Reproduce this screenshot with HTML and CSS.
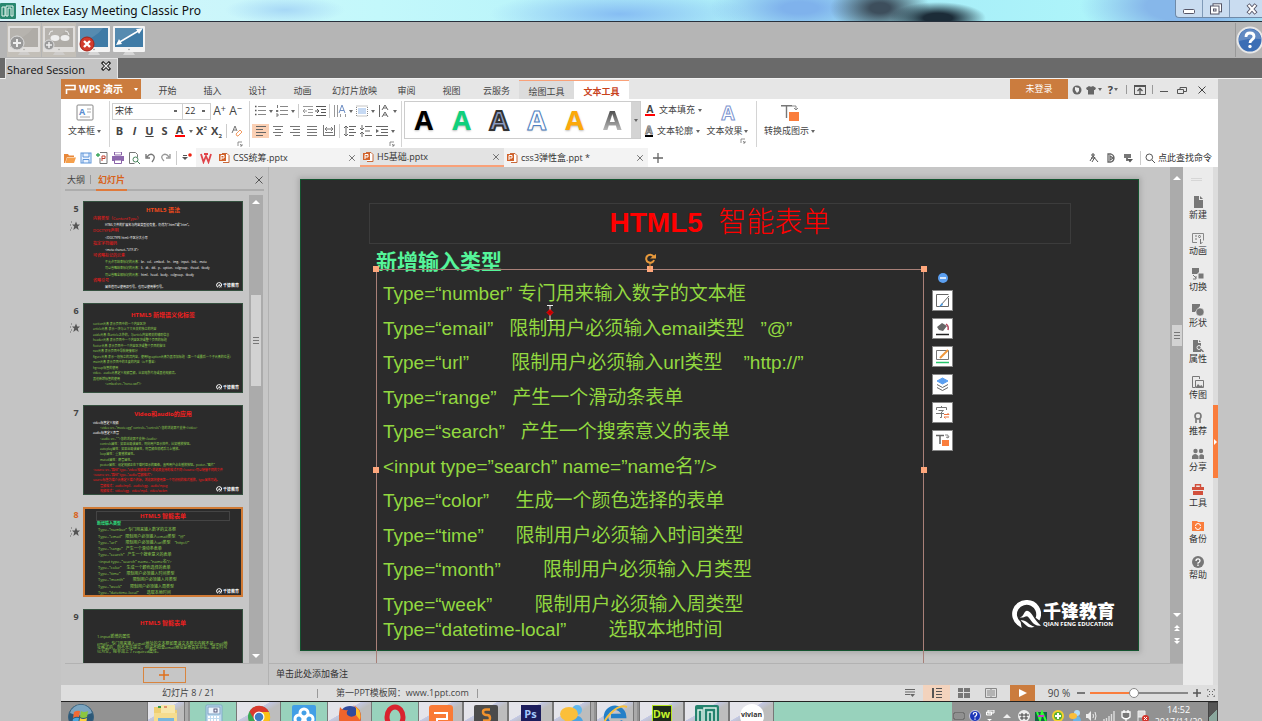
FILE: index.html
```html
<!DOCTYPE html>
<html lang="zh-CN">
<head>
<meta charset="utf-8">
<title>Inletex Easy Meeting Classic Pro</title>
<link rel="stylesheet" href="styles.css">
</head>
<body>
<svg class="sprite" aria-hidden="true">
  <symbol id="close" viewBox="0 0 10 10"><path d="M1.5 1.5l7 7M8.500 1.500l-7 7" stroke="currentColor" fill="none"/></symbol>
  <symbol id="monitor" viewBox="0 0 34 34"><rect x="1" y="3" width="32" height="26" rx="1" fill="#f4f4f4"/><rect x="3" y="5" width="28" height="19" fill="currentColor"/><path d="M3 18Q18 16 26 5H3z" fill="#fff" opacity=".12"/><path d="M13 29h8l2 3H11z" fill="#d6d6d6"/><circle cx="17" cy="26.500" r=".8" fill="#999"/></symbol>
  <symbol id="ppt" viewBox="0 0 12 12"><path d="M4 1.500h5l2 2v7H5" fill="#fff" stroke="#c8693a"/><rect x="1" y="2" width="7" height="7" fill="#d2622a"/><path d="M3 8V3.500h3v2.500H3" fill="none" stroke="#fff"/></symbol>
  <symbol id="launch" viewBox="0 0 6 6"><path d="M1 5V1h4M3 3l2 2M5 3v2H3" stroke="#777" fill="none" stroke-width=".8"/></symbol>
  <symbol id="star" viewBox="0 0 10 10"><path d="M1 1h1M0 4h1M1 7h1M0 9h1" stroke="#666"/><path d="M6 .500l1.200 3H10L7.800 5.400 8.700 9 6 6.900 3.300 9l.9-3.600L2 3.500h2.800z" fill="#555"/></symbol>
  <symbol id="mark" viewBox="0 0 28 28"><path d="M14 1a13 13 0 0 0-8 23.200l4 2.800-1-5.500a9 9 0 1 1 14-4l3.500 2.500A13 13 0 0 0 14 1z" fill="#fff"/><path d="M8 17c4 0 4-6 7-6 4 0 6 8 13 14-8 1-10-8-13-9-3 0-3 2-7 1z" fill="#fff"/><path d="M9 20c5-1 7 4 13 6-6 2-8-2-13-6z" fill="#fff"/></symbol>
  <symbol id="up" viewBox="0 0 8 8"><path d="M0 6h8L4 2z" fill="#fff"/></symbol>
  <symbol id="down" viewBox="0 0 8 8"><path d="M0 2h8L4 6z" fill="#fff"/></symbol>
  <symbol id="upup" viewBox="0 0 8 8"><path d="M1 4h6L4 1zM1 7h6L4 4z" fill="#fff"/></symbol>
  <symbol id="convert" viewBox="0 0 20 18"><path d="M1 1.700h11M6.500 2v12" stroke="#777" stroke-width="1.400" fill="none"/><rect x="9" y="8" width="10" height="9" fill="#fa7d3c"/><path d="M12 2h4v4M14 4l2 2 2-2" stroke="#888" fill="none"/></symbol>
</svg>

<header class="titlebar">
  <svg class="s16" viewBox="0 0 16 16"><rect width="16" height="16" rx="1" fill="#28876f"/><path d="M2 13V4h3v9zM6 13V3h7v10h-2V5H8v8z" fill="none" stroke="#e9f7f2"/></svg>
  <h1>Inletex Easy Meeting Classic Pro</h1>
  <div class="winbtns">
    <button aria-label="Minimize"><svg viewBox="0 0 14 12"><rect x="1.500" y="6.500" width="11" height="4" rx="1" fill="#fff" stroke="#556"/></svg></button>
    <button aria-label="Restore"><svg viewBox="0 0 14 12"><rect x="4" y=".800" width="8.500" height="8" fill="#fff" stroke="#556"/><rect x="1.500" y="3" width="8.500" height="8" fill="#fff" stroke="#556"/><rect x="4.500" y="6" width="2.500" height="2" stroke="#556" fill="none"/></svg></button>
    <button class="last" aria-label="Close"><svg viewBox="0 0 14 12"><path d="M3 1.500l8 9M11 1.500l-8 9" stroke="#556" stroke-width="4"/><path d="M3.500 2l7 8M10.500 2l-7 8" stroke="#fff" stroke-width="2"/></svg></button>
  </div>
</header>

<nav class="meeting">
  <button class="off" aria-label="Share screen"><svg viewBox="0 0 34 34" color="#a3a19d"><use href="#monitor" opacity=".6"/><circle cx="10" cy="20" r="7" fill="#999" stroke="#ddd"/><path d="M10 16v8M6 20h8" stroke="#eee" stroke-width="2"/></svg></button>
  <button class="off" aria-label="Watch screen"><svg viewBox="0 0 34 34" color="#a3a19d"><use href="#monitor" opacity=".6"/><path d="M7 12q1-5 4-4M27 12q-1-5-4-4" stroke="#eee" fill="none"/><ellipse cx="13" cy="15" rx="4.500" ry="3" fill="#eee"/><ellipse cx="23" cy="15" rx="4.500" ry="3" fill="#eee"/><circle cx="7" cy="22" r="5" fill="#999" stroke="#ddd"/><path d="M7 19v6M4 22h6" stroke="#eee" stroke-width="1.500"/></svg></button>
  <button aria-label="Stop sharing"><svg viewBox="0 0 34 34" color="#3f7ba6"><use href="#monitor"/><circle cx="10" cy="21" r="7" fill="#d23a2c" stroke="#a52318"/><path d="M7 18l6 6M13 18l-6 6" stroke="#fff" stroke-width="2.400"/></svg></button>
  <button aria-label="Full screen"><svg viewBox="0 0 34 34" color="#3f7ba6"><use href="#monitor"/><path d="M6 20L28 7" stroke="#fff" stroke-width="1.500"/><path d="M4 22l3-6 3 5zM31 5l-7 1 3 5z" fill="#fff"/></svg></button>
  <button class="help" aria-label="Help"><svg viewBox="0 0 28 28"><circle cx="14" cy="14" r="12.500" fill="#3c6eb5" stroke="#e8e8e8" stroke-width="2"/><path d="M3 15a11 11 0 0 1 22-2Q14 12 3 15z" fill="#7d9dcb" opacity=".6"/><path d="M10 11q0-4 4-4t4 3.500q0 2-2 3.200t-2 3.300" stroke="#fff" stroke-width="2.800" fill="none"/><circle cx="14" cy="20.500" r="1.700" fill="#fff"/></svg></button>
</nav>

<div class="sessions"><div class="session"><span>Shared Session</span><button aria-label="Close session"><svg class="s10" viewBox="0 0 10 10"><path d="M1 1l8 8M9 1l-8 8" stroke="#222" stroke-width="3.200"/><path d="M2 2l6 6M8 2l-6 6" stroke="#eee" stroke-width="1.200"/></svg></button></div></div>

<div class="remote">
<section class="wps">
  <nav class="menu">
    <button class="brand"><svg class="s12" viewBox="0 0 12 12"><path d="M1 2.500h10v4H2.500V11" stroke="#fff" stroke-width="1.600" fill="none"/></svg><b>WPS 演示</b><i class="ar w"></i></button>
    <button>开始</button><button>插入</button><button>设计</button><button>动画</button><button>幻灯片放映</button><button>审阅</button><button>视图</button><button>云服务</button><button class="ctx">绘图工具</button><button class="ctx on">文本工具</button>
    <span class="grow"></span>
    <button class="login">未登录</button>
    <div class="sys">
      <button aria-label="Skin"><svg class="s10" viewBox="0 0 10 10"><circle cx="5" cy="5" r="4.500" fill="#666"/><path d="M3 2l4 1v3L5 8 3 5z" fill="#eee"/></svg></button>
      <button aria-label="Theme"><svg class="s10" viewBox="0 0 10 10"><path d="M0 3l3-2q2 1.500 4 0l3 2-1 2H8v4.500H2V5H1z" fill="#666"/></svg><i class="ar"></i></button>
      <button aria-label="Help"><b class="q">?</b><i class="ar"></i></button><i class="sep s"></i>
      <button aria-label="Collapse"><svg class="s12" viewBox="0 0 12 12"><path d="M.5 1.500h11v9H.5z" fill="none" stroke="#555"/><path d="M0 2h12" stroke="#555" stroke-width="2"/><path d="M6 10V5M3.500 7L6 4.500 8.500 7" stroke="#555" fill="none" stroke-width="1.300"/></svg></button><i class="sep s"></i>
      <button aria-label="Minimize window"><svg class="s10" viewBox="0 0 10 10"><path d="M1 6.500h8" stroke="#555"/></svg></button>
      <button class="wide" aria-label="Restore window"><svg class="s10" viewBox="0 0 10 10"><path d="M.5 4.500h6v4h-6zM3 4V2.500h6.500v4H7" fill="none" stroke="#555"/></svg></button>
      <button class="wide" aria-label="Close window"><svg class="s10" color="#444"><use href="#close"/></svg></button>
    </div>
  </nav>

  <div class="ribbon">
    <div class="grp tb"><button class="tall"><svg class="i18" viewBox="0 0 18 18"><rect x="1" y="1" width="16" height="15" rx="1" fill="#fff" stroke="#888"/><text x="3" y="11" class="ga">A</text><path d="M11 5h4M11 8h4M4 13h10" stroke="#aaa"/></svg><span>文本框<i class="ar"></i></span></button></div>
    <div class="grp font">
      <div class="row"><select class="face" aria-label="字体"><option>宋体</option></select><select class="size" aria-label="字号"><option>22</option></select><button class="c15 big" aria-label="增大字号">A<sup>+</sup></button><button class="c15 big" aria-label="减小字号">A<sup>−</sup></button></div>
      <div class="row"><button class="c15"><b>B</b></button><button class="c15"><b><em>I</em></b></button><button class="c15"><b><u>U</u></b></button><button class="c15"><b>S</b></button><button class="c15"><b class="redline">A</b></button><i class="ar"></i><button class="c15"><b>X<sup>2</sup></b></button><button class="c15"><b>X<sub>2</sub></b></button><i class="sep"></i><button class="c15" aria-label="清除格式"><svg class="s12" viewBox="0 0 12 12"><path d="M1 8L4 1l2 5M2 5h3" stroke="#777" fill="none"/><path d="M5 9l4-4 2 2-4 4H6z" fill="#fff" stroke="#f29b62"/></svg></button></div>
      <div class="foot"><svg class="s6"><use href="#launch"/></svg></div>
    </div>
    <div class="grp para">
      <div class="row">
        <button class="c15" aria-label="项目符号"><svg class="s12" viewBox="0 0 12 12"><path d="M4 1.500h8M4 5.500h8M4 9.500h8" stroke="#888"/><path d="M1 1.500h1.500M1 5.500h1.500M1 9.500h1.500" stroke="#555" stroke-width="1.500"/></svg></button><i class="ar"></i>
        <button class="c15" aria-label="编号"><svg class="s12" viewBox="0 0 12 12"><path d="M4 1.500h8M4 5.500h8M4 9.500h8" stroke="#888"/><path d="M1.500 0v3M0 5.500h2v1H0M0 9h2v2H0" stroke="#555" fill="none" stroke-width=".8"/></svg></button><i class="ar"></i><i class="sep"></i>
        <button class="c13" aria-label="减少缩进"><svg class="s12" viewBox="0 0 12 12"><path d="M1 1.500h10M6 4.500h5M6 7.500h5M1 10.500h10M5 6H1M3 4L1 6l2 2" stroke="#999" fill="none"/></svg></button>
        <button class="c13" aria-label="增加缩进"><svg class="s12" viewBox="0 0 12 12"><path d="M1 1.500h10M6 4.500h5M6 7.500h5M1 10.500h10M0 6h4M2 4l2 2-2 2" stroke="#555" fill="none"/></svg></button><i class="sep"></i>
        <button class="c15" aria-label="文字方向"><svg class="s12" viewBox="0 0 12 12"><path d="M.5 0v12M3.500 0v12M6.500 9v3M11.500 9v3" stroke="#999"/><path d="M5 8L8 0l3 8M6 5.500h4" stroke="#6f8fc4" fill="none"/></svg></button><i class="ar"></i>
        <button class="c15" aria-label="对齐文本"><svg class="s12" viewBox="0 0 12 12"><path d="M.5 1h11v10H.5z" fill="none" stroke="#888" stroke-dasharray="1 1"/><path d="M2 4h8M2 6h8M2 8h8" stroke="#8db4e8"/></svg></button><i class="ar"></i>
        <button class="c15" aria-label="竖排"><svg class="s12" viewBox="0 0 12 12"><path d="M1.500 0v12M4 5l3-5 3 5M5 3h4M4 12l3-5 3 5M5 10h4" stroke="#666" fill="none"/></svg></button><i class="ar"></i>
      </div>
      <div class="row">
        <button class="c17 sel" aria-label="左对齐"><svg class="s12" viewBox="0 0 12 12"><path d="M1 1.500h10M1 4.500h7M1 7.500h10M1 10.500h7" stroke="#666"/></svg></button>
        <button class="c17" aria-label="居中"><svg class="s12" viewBox="0 0 12 12"><path d="M1 1.500h10M3 4.500h6M1 7.500h10M3 10.500h6" stroke="#777"/></svg></button>
        <button class="c17" aria-label="右对齐"><svg class="s12" viewBox="0 0 12 12"><path d="M1 1.500h10M4 4.500h7M1 7.500h10M4 10.500h7" stroke="#777"/></svg></button>
        <button class="c17" aria-label="两端对齐"><svg class="s12" viewBox="0 0 12 12"><path d="M1 1.500h10M1 4.500h10M1 7.500h10M1 10.500h10" stroke="#777"/></svg></button>
        <button class="c17" aria-label="分散对齐"><svg class="s12" viewBox="0 0 12 12"><path d="M.5 0v11M11.500 0v11M1 10.500h10M2 7.500h8M2 4h8M4 2L2 4l2 2M8 2l2 2-2 2" stroke="#777" fill="none"/></svg></button><i class="sep"></i>
        <button class="c15" aria-label="行距"><svg class="s12" viewBox="0 0 12 12"><path d="M5 1.500h7M5 4.500h5M5 7.500h7M5 10.500h5M2 1v10M0 3l2-2 2 2M0 9l2 2 2-2" stroke="#666" fill="none"/></svg></button>
        <button class="c17" aria-label="段前段后"><svg class="s12" viewBox="0 0 12 12"><path d="M5 1.500h7M5 6h5M5 10.500h7M2 0v4M2 8v4M0 3l2 2 2-2M0 9l2-2 2 2" stroke="#666" fill="none"/></svg></button>
        <button class="c15" aria-label="段落缩进"><svg class="s12" viewBox="0 0 12 12"><path d="M0 1.500h12M5 4.500h7M5 7.500h7M0 10.500h12" stroke="#666"/><path d="M0 4l3 2-3 2z" fill="#666"/></svg></button><i class="ar"></i>
      </div>
      <div class="foot"><svg class="s6"><use href="#launch"/></svg></div>
    </div>
    <div class="grp art">
      <div class="gallery"><button class="a1">A</button><button class="a2">A</button><button class="a3">A</button><button class="a4">A</button><button class="a5">A</button><button class="a6">A</button><button class="more" aria-label="更多样式"><i class="ar"></i></button></div>
      <div class="stack"><button><b class="fa redline">A</b>文本填充<i class="ar"></i></button><button><b class="fa hollow">A</b>文本轮廓<i class="ar"></i></button></div>
      <div class="fx"><button class="tall"><b class="fxa">A</b><span>文本效果<i class="ar"></i></span></button><div class="foot"><svg class="s6"><use href="#launch"/></svg></div></div>
    </div>
    <div class="grp conv"><button class="tall"><svg class="i18"><use href="#convert"/></svg><span>转换成图示<i class="ar"></i></span></button></div>
  </div>

  <div class="docs">
    <div class="quick">
      <button aria-label="打开"><svg class="s12" viewBox="0 0 12 12"><path d="M0 2h4l1 1.500h5V5H3L1 11H0z" fill="#e8883a"/><path d="M3 5.500h9L10 11H1.500z" fill="#f5a04c"/></svg></button>
      <button aria-label="保存"><svg class="s12" viewBox="0 0 12 12"><rect x="1" y="1" width="10" height="10" fill="#eaf3ff" stroke="#5d94d8"/><path d="M3 1v4h6V1M3 11V7.500h6V11" stroke="#5d94d8" fill="none"/></svg></button>
      <button aria-label="输出PDF"><svg class="s12" viewBox="0 0 12 12"><path d="M4 .500h7v11H4V6" fill="#fff" stroke="#777"/><path d="M6 9V4h3v2.500H6" stroke="#c04030" fill="none"/><path d="M0 3h4M2 1v4" stroke="#3ba55a" stroke-width="1.300"/></svg></button>
      <button aria-label="打印"><svg class="s12" viewBox="0 0 12 12"><path d="M2.500 0h7v3h-7z" fill="#fff" stroke="#8a62a8"/><path d="M0 4h12v5H0z" fill="#8d68ad"/><path d="M2.500 8h7v3.500h-7z" fill="#fff" stroke="#8a62a8"/></svg></button>
      <button aria-label="预览"><svg class="s12" viewBox="0 0 12 12"><path d="M1.500.500h6l2 2v3M1.500.500v11h5" fill="none" stroke="#777"/><circle cx="7.500" cy="7.500" r="2.500" fill="#fff" stroke="#47835b"/><path d="M9 9l3 3" stroke="#47835b"/></svg></button>
      <button aria-label="撤销"><svg class="s12" viewBox="0 0 12 12"><path d="M3 5q3-4 6-2t-1 7M2 2v4h4" stroke="#777" stroke-width="1.400" fill="none"/></svg></button>
      <button aria-label="恢复"><svg class="s12" viewBox="0 0 12 12"><path d="M9 5Q6 1 3 3t1 6M10 2v4H6" stroke="#999" stroke-width="1.400" fill="none"/></svg></button>
      <i class="sep"></i>
      <button class="rec" aria-label="自定义"><svg class="s12" viewBox="0 0 12 12"><path d="M1 5h6L4 8z" fill="#555"/><path d="M2 3.500h4" stroke="#555"/><circle cx="9" cy="3" r="1.800" fill="#e21"/></svg></button>
    </div>
    <button class="wlogo" aria-label="WPS"><svg class="s12" viewBox="0 0 12 12"><path d="M1 2l2.500 8L6 4l2.500 6L11 2M4 2h4" stroke="#e0444a" stroke-width="1.800" fill="none"/></svg></button>
    <div class="doc d1"><svg class="s12"><use href="#ppt"/></svg><span>CSS统筹.pptx</span><button aria-label="关闭"><svg class="s8" color="#555"><use href="#close"/></svg></button></div>
    <div class="doc cur"><svg class="s12"><use href="#ppt"/></svg><span>H5基础.pptx</span><button aria-label="关闭"><svg class="s8" color="#555"><use href="#close"/></svg></button></div>
    <div class="doc"><svg class="s12"><use href="#ppt"/></svg><span>css3弹性盒.ppt *</span><button aria-label="关闭"><svg class="s8" color="#555"><use href="#close"/></svg></button></div>
    <button class="newdoc" aria-label="新建"><svg class="s10" viewBox="0 0 10 10"><path d="M5 0v10M0 5h10" stroke="#666" stroke-width="1.300"/></svg></button>
    <span class="grow"></span>
    <div class="find">
      <svg class="s10" viewBox="0 0 10 10"><path d="M2 2h4M4 0v3L1 8M4 3l5 6M6 4L3 9M2 5h4" stroke="#555" fill="none"/></svg>
      <svg class="s10" viewBox="0 0 10 10"><path d="M2 1h3q3 1 3 4T5 9H2zM4 3v4l3-2z" fill="none" stroke="#666" stroke-width="1.300"/></svg>
      <svg class="s10" viewBox="0 0 10 10"><path d="M1 1h7v4H5v3H3V5H1z" fill="#777"/><path d="M4 6h6L7 9.500z" fill="#555"/></svg>
      <i class="sep"></i>
      <svg class="s10" viewBox="0 0 10 10"><circle cx="4.300" cy="4.300" r="3.300" fill="none" stroke="#555"/><path d="M7 7l3 3" stroke="#555"/></svg><a href="#">点此查找命令</a>
    </div>
  </div>

  <div class="main">
    <aside class="outline">
      <div class="otabs"><button>大纲</button><i class="sep s"></i><button class="on">幻灯片</button><span class="grow"></span><button aria-label="关闭窗格"><svg class="s10" color="#555"><use href="#close"/></svg></button></div>
      <div class="olist">
        <ol>
          <li><span class="no">5<svg class="s10"><use href="#star"/></svg></span><div class="thumb"><h3 class="or">HTML5 语法</h3><div class="tl t5">
            <p class="r">内容类型（ContentType）</p><p class="w in">HTML文件的扩展名与内容类型没有变，仍然为“.html”或“.htm”。</p><p class="r">DOCTYPE声明</p><p class="w in">&lt;!DOCTYPE html&gt;不区分大小写</p><p class="r">指定字符编码</p><p class="w in">&lt;meta charset=“UTF-8”&gt;</p><p class="r">可省略标记的元素</p><p class="in">不允许写结束标记的元素：<span class="w">br、col、embed、hr、img、input、link、meta</span></p><p class="in">可以省略结束标记的元素：<span class="w">li、dt、dd、p、option、colgroup、thead、tbody</span></p><p class="in">可以省略全部标记的元素：<span class="w">html、head、body、colgroup、tbody</span></p><p class="r">省略引号</p><p class="w in">属性值可以使用双引号，也可以使用单引号。</p></div><div class="tlogo"><svg><use href="#mark"/></svg>千锋教育</div></div></li>
          <li><span class="no">6<svg class="s10"><use href="#star"/></svg></span><div class="thumb"><h3 class="t6h">HTML5 新增语义化标签</h3><div class="tl t6">
            <p>section元素 表示页面中的一个内容区块</p><p>article元素 表示一块与上下文无关的独立的内容</p><p>aside元素 在article之外的，与article内容相关的辅助信息</p><p>header元素 表示页面中一个内容区块或整个页面的标题</p><p>footer元素 表示页面中一个内容区块或整个页面的脚注</p><p>nav元素 表示页面中导航链接部分</p><p>figure元素 表示一段独立的流内容，使用figcaption元素为其添加标题（第一个或最后一个子元素的位置）</p><p>main元素 表示页面中的主要的内容（ie不兼容）</p><p>hgroup标签的使用</p><p>video、audio元素定义视频音频，比如电影片段或其他视频流。</p><p>其他新增标签的使用</p><p class="in">&lt;embed src=“horse.swf”/&gt;</p></div><div class="tlogo"><svg><use href="#mark"/></svg>千锋教育</div></div></li>
          <li><span class="no">7</span><div class="thumb"><h3>Video和audio的应用</h3><div class="tl t7">
            <p class="w">video标签定义视频</p><p class="n1">&lt;video src=“movie.ogg” controls=“controls”&gt;您的浏览器不支持&lt;/video&gt;</p><p class="w">audio标签定义声音</p><p class="n1">&lt;audio src=“ ”&gt;您的浏览器不支持&lt;/audio&gt;</p><p class="n1">controls属性：如果出现该属性，则向用户显示控件，比如播放按钮。</p><p class="n1">autoplay属性：如果出现该属性，则音频在就绪后马上播放。</p><p class="n1">loop属性：重复播放属性。</p><p class="n1">muted属性：静音属性。</p><p class="n1">poster属性：规定视频正在下载时显示的图像，直到用户点击播放按钮。poster=“图片”</p><p class="r">&lt;source src=“路径” type=“video/视频格式”&gt;浏览器支持的格式不同&lt;/source&gt;可以链接不同的文件</p><p class="r">&lt;source src=“路径” type=“audio/音频格式”&gt;</p><p class="r">source标签为媒介元素定义媒介资源，浏览器将使用第一个可识别的格式播放，type属性可选。</p><p class="r n1">音频格式：audio/mp3、audio/ogg、audio/mpeg</p><p class="r n1">视频格式：video/ogg、video/mp4、video/webm</p></div><div class="tlogo"><svg><use href="#mark"/></svg>千锋教育</div></div></li>
          <li class="cur"><span class="no">8<svg class="s10"><use href="#star"/></svg></span><div class="thumb"><h3 class="bx">HTML5 智能表单</h3><div class="tl t8">
            <p class="sub">新增输入类型</p><p>Type=“number” 专门用来输入数字的文本框</p><p>Type=“email”   限制用户必须输入email类型   ”@”</p><p>Type=“url”        限制用户必须输入url类型    ”http://”</p><p>Type=“range”   产生一个滑动条表单</p><p>Type=“search”   产生一个搜索意义的表单</p><p>&lt;input type=”search” name=”name名”/&gt;</p><p>Type=“color”     生成一个颜色选择的表单</p><p>Type=“time”      限制用户必须输入时间类型</p><p>Type=“month”        限制用户必须输入月类型</p><p>Type=“week”        限制用户必须输入周类型</p><p>Type=“datetime-local”        选取本地时间</p></div><div class="tlogo"><svg><use href="#mark"/></svg>千锋教育</div></div></li>
          <li><span class="no">9</span><div class="thumb"><h3 class="t9h">HTML5 智能表单</h3><div class="tl t9"><p>1.input新增的属性</p><p class="wrap">email：专门用来输入email地址的文本框如果该文本框中内容不是email地址格式的，则不允许提交，但是不检查email地址是否真实存在。提交时可以为空，除非加上了required属性。</p></div></div></li>
        </ol>
        <div class="vbar"><svg class="s8"><use href="#up"/></svg><div class="knob tallknob"></div><svg class="s8 end"><use href="#down"/></svg></div>
      </div>
      <div class="oadd"><button aria-label="新建幻灯片"><svg class="s10" viewBox="0 0 10 10"><path d="M5 0v10M0 5h10" stroke="#e0701c" stroke-width="1.500"/></svg></button></div>
    </aside>

    <div class="work">
      <div class="stage">
        <div class="canvas">
          <article class="slide">
            <h2 class="stitle">HTML5  <span>智能表单</span></h2>
            <p class="ssub">新增输入类型</p>
            <div class="sbox">
              <div class="lines"><p>Type=“number” 专门用来输入数字的文本框</p><p>Type=“email”   限制用户必须输入email类型   ”@”</p><p>Type=“url”        限制用户必须输入url类型    ”http://”</p><p>Type=“range”   产生一个滑动条表单</p><p>Type=“search”   产生一个搜索意义的表单</p><p>&lt;input type=”search” name=”name名”/&gt;</p><p>Type=“color”     生成一个颜色选择的表单</p><p>Type=“time”      限制用户必须输入时间类型</p><p>Type=“month”        限制用户必须输入月类型</p><p>Type=“week”        限制用户必须输入周类型</p></div>
              <p>Type=“datetime-local”        选取本地时间</p>
              <i class="h tl0"></i><i class="h tc"></i><i class="h tr"></i><i class="h ml"></i><i class="h mr"></i>
              <svg class="rot" viewBox="0 0 12 16"><path d="M9.500 3.500A4 4 0 1 0 10 7" fill="none" stroke="#e89a3c" stroke-width="2"/><path d="M6 5.500h6V1z" fill="#e89a3c"/><path d="M6 10v6" stroke="#e89a3c"/></svg>
            </div>
            <svg class="caret" viewBox="0 0 8 16"><path d="M1 .500h6M1 15.500h6M4 1v14" stroke="#eee"/><path d="M4 4.500L7 7.500 4 10.500 1 7.500z" fill="#b00" stroke="#f00"/></svg>
            <div class="floatbar">
              <button class="minus" aria-label="收起"><svg class="s10" viewBox="0 0 10 10"><circle cx="5" cy="5" r="5" fill="#5b9ff0"/><path d="M2 5h6" stroke="#fff" stroke-width="1.500"/></svg></button>
              <button aria-label="样式"><svg viewBox="0 0 15 15"><path d="M13.500 5v8.500h-12v-12h12M5 13L14 3" fill="none" stroke="#666"/><path d="M4 14l3-4 1 2z" fill="#3f97e8"/></svg></button>
              <button aria-label="填充"><svg viewBox="0 0 15 15"><path d="M2 6l5-4 5 3-4 5-4-1z" fill="#666"/><path d="M11 3q3 2 2 6" stroke="#b3455d" stroke-width="1.500" fill="none"/><path d="M1 13.500h13" stroke="#222" stroke-width="1.500"/></svg></button>
              <button aria-label="轮廓"><svg viewBox="0 0 15 15"><path d="M1.500 1.500h12v9h-12z" fill="none" stroke="#777"/><path d="M5 9l8-8" stroke="#f0983c" stroke-width="2"/><path d="M1 13.500h13" stroke="#25c46a" stroke-width="1.500"/></svg></button>
              <button aria-label="图层"><svg viewBox="0 0 15 15"><path d="M2 4l5.500-3L13 4 7.500 7z" fill="#5b9ff0" stroke="#5b9ff0"/><path d="M2 7.500l5.500 3 5.500-3M2 10.500l5.500 3 5.500-3" fill="none" stroke="#666"/></svg></button>
              <button aria-label="文字"><svg viewBox="0 0 15 15"><path d="M1.500 5V2.500h10V5M6.500 1v1M3.500 5.500h5L6.500 7v5.500H5M1 8.500h8" fill="none" stroke="#777"/><path d="M9 9.500h5l-1.500-1.500M14 12H9l1.500 1.500" fill="none" stroke="#f0743c"/></svg></button>
              <button aria-label="转换"><svg viewBox="0 0 15 15"><path d="M1 2.500h8M5 2v9" stroke="#666" stroke-width="1.500"/><path d="M10 2h3v3M11 4l2 1 1-2" stroke="#888" fill="none"/><path d="M7 7h7v6H7z" fill="#fa7d3c"/></svg></button>
            </div>
            <div class="logo"><svg><use href="#mark"/></svg><div><strong>千锋教育</strong><small>QIAN FENG EDUCATION</small></div></div>
          </article>
        </div>
        <div class="vbar wide"><svg class="s8"><use href="#up"/></svg><div class="knob midknob"></div><div class="ends"><svg class="s8"><use href="#down"/></svg><svg class="s8"><use href="#upup"/></svg><svg class="s8 flip"><use href="#upup"/></svg></div></div>
      </div>
      <div class="notes">单击此处添加备注</div>
    </div>

    <nav class="side">
      <i class="grip"></i>
      <button><svg class="s12" viewBox="0 0 12 12"><path d="M2 0h5v4h4v8H2z" fill="#777"/><path d="M8 0l3 3H8z" fill="#777"/></svg>新建</button>
      <button><svg class="s12" viewBox="0 0 12 12"><path d="M5 10.500H.500v-9h11v7" fill="none" stroke="#888"/><path d="M3 4h2M3 7h2M7.500 3l1 1.500-1 1.500-1-1.500zM8.500 7v5l2-2" stroke="#777" fill="none"/></svg>动画</button>
      <button><svg class="s12" viewBox="0 0 12 12"><path d="M0 0h7v6H0z" fill="#777"/><path d="M6 5h6v6H6z" fill="#777" stroke="#ebebeb"/><path d="M1 7l3 3M4 8v3H1" stroke="#777" fill="none"/></svg>切换</button>
      <button><svg class="s12" viewBox="0 0 12 12"><path d="M0 0h8v2L3 8H0z" fill="#777"/><circle cx="8" cy="8" r="4" fill="#777" stroke="#ebebeb" stroke-width=".5"/></svg>形状</button>
      <button><svg class="s12" viewBox="0 0 12 12"><path d="M1 0h5v3h3v9H1z" fill="#777"/><path d="M7 0l2 2H7z" fill="#777"/><circle cx="7" cy="7.500" r="2" fill="#777" stroke="#ebebeb"/><path d="M8.500 9l3 3" stroke="#777" stroke-width="1.500"/></svg>属性</button>
      <button><svg class="s12" viewBox="0 0 12 12"><path d="M3 11.500H.500V.500h7V3M3.500 4.500h8v7h-8z" fill="none" stroke="#777"/><path d="M4 11l2-3 2 2 1.500-1L11 11z" fill="#777"/></svg>传图</button>
      <button><svg class="s12" viewBox="0 0 12 12"><circle cx="6" cy="4" r="3" fill="none" stroke="#777" stroke-width="1.600"/><path d="M4 7v4M8 7v4" stroke="#777" stroke-width="1.600"/></svg>推荐</button>
      <button><svg class="s12" viewBox="0 0 12 12"><circle cx="3.500" cy="3" r="2.200" fill="#777"/><circle cx="9" cy="3" r="2.200" fill="#777"/><path d="M0 11V8q3-4 6.500 0v3zM7.300 11V7.500q2-2.500 4.700 0V11z" fill="#777"/></svg>分享</button>
      <button><svg class="s12" viewBox="0 0 12 12"><path d="M3.500 3V.800h5V3" fill="none" stroke="#d2503c" stroke-width="1.400"/><path d="M0 3h12v3H0zM1 7h10v4H1z" fill="#d2503c"/></svg>工具</button>
      <button><svg class="s12" viewBox="0 0 12 12"><path d="M0 1h5l1 1h6v9H0z" fill="#fa7d3c"/><path d="M3.500 6a2.500 2.500 0 0 1 5 0M8.500 7a2.500 2.500 0 0 1-5 0" fill="none" stroke="#fff"/></svg>备份</button>
      <button><svg class="s12" viewBox="0 0 12 12"><circle cx="6" cy="6" r="6" fill="#777"/><path d="M4 5q0-2.200 2-2.200T8 4.700Q8 6 6 7v.800M6 8.500V10" fill="none" stroke="#fff" stroke-width="1.300"/></svg>帮助</button>
    </nav>
    <div class="edge"><button aria-label="展开"><svg viewBox="0 0 5 8"><path d="M1 1l3 3-3 3z" fill="#fff"/></svg></button></div>
  </div>

  <footer class="status">
    <span class="st1">幻灯片 8 / 21</span><i class="sep s"></i><span class="st2">第一PPT模板网：www.1ppt.com</span><i class="sep s"></i><span class="grow"></span>
    <button aria-label="备注"><svg class="s12" viewBox="0 0 12 12"><path d="M1 2.500h10M1 5h10M1 7.500h5" stroke="#666"/><path d="M6 7h5L8.500 10z" fill="#666"/></svg></button>
    <button class="sel" aria-label="普通视图"><svg class="s12" viewBox="0 0 12 12"><path d="M1 1h2v10H1z" fill="#555"/><path d="M5 1.500h6M5 4.500h6M5 7.500h6M5 10.500h6" stroke="#555"/></svg></button>
    <button aria-label="浏览视图"><svg class="s12" viewBox="0 0 12 12"><path d="M0 1h5v4H0zM6 1h6v4H6zM0 6h5v5H0zM6 6h6v5H6z" fill="#777"/></svg></button>
    <button aria-label="阅读视图"><svg class="s12" viewBox="0 0 12 12"><path d="M.500 1.500h11v9H.500zM6 1v10M2 4h3M2 6h3M2 8h3M7 4h3M7 6h3M7 8h3" fill="none" stroke="#888"/></svg></button>
    <button class="play" aria-label="放映"><svg class="s10" viewBox="0 0 10 10"><path d="M1 1l8 4-8 4z" fill="#fff"/></svg></button>
    <label class="pct" for="zoom">90 %</label>
    <svg class="s8" viewBox="0 0 8 8"><path d="M0 4h8" stroke="#555" stroke-width="1.500"/></svg>
    <input id="zoom" type="range" min="0" max="100" value="44">
    <svg class="s8" viewBox="0 0 8 8"><path d="M0 4h8M4 0v8" stroke="#555" stroke-width="1.500"/></svg>
    <svg class="s8 fit" viewBox="0 0 8 8"><path d="M0 2V0h2M6 0h2v2M8 6v2H6M2 8H0V6M2 2l1 1M6 2L5 3M2 6l1-1M6 6L5 5" stroke="#666" fill="none"/></svg>
  </footer>

  <div class="taskbar">
    <button class="orb" aria-label="Start"><svg viewBox="0 0 28 28"><circle cx="14" cy="14" r="12.500" fill="#2c5878" stroke="#38627e"/><path d="M3 10a11.500 11.500 0 0 1 22 0q-11 5-22 0z" fill="#9cc5dd" opacity=".7"/><path d="M7 9q3-2 6-1l-1 6q-3-1-6 1z" fill="#f06a35"/><path d="M14 8q3 2 7 0l-1 6q-4 2-7 0z" fill="#8cc63f"/><path d="M6 16q3-2 6-1l-1 6q-3-1-6 1z" fill="#4aa8e0"/><path d="M13 15q3 2 7 0l-1 6q-4 2-7 0z" fill="#fcd03c"/></svg></button>
    <button class="app w37" aria-label="Explorer"><svg viewBox="0 0 26 26"><path d="M1 3h8l2 3h13v18H1z" fill="#efcf72"/><path d="M8 1h14v8H8z" fill="#f7e7ab"/><path d="M1 9h23v14H1z" fill="#f5dc8e"/><path d="M5 14h16v8H5z" fill="#78b6dc"/><path d="M5 3h3" stroke="#3a9b4a" stroke-width="2"/><path d="M11 3h3" stroke="#cc4433"/></svg></button>
    <button class="app flat w46" aria-label="Calculator"><svg viewBox="0 0 26 26"><rect x="6" y="1" width="16" height="24" rx="1" fill="#c0dcf0" stroke="#7fa9c6"/><rect x="8" y="3" width="12" height="7" fill="#f0f7ff" stroke="#7b9fc0"/><path d="M8 13h12M8 16h12M8 19h12" stroke="#fff" stroke-width="2" stroke-dasharray="2 1"/><rect x="14" y="5" width="3" height="3" fill="none" stroke="#557"/></svg></button>
    <button class="app" aria-label="Chrome"><svg viewBox="0 0 26 26"><circle cx="13" cy="13" r="11" fill="#38a852"/><path d="M3.500 7.500A11 11 0 0 1 23 8H13l-4 9z" fill="#d93a2f"/><path d="M13 24a11 11 0 0 0 10-16H13l4 8z" fill="#fbc116"/><circle cx="13" cy="13" r="5.500" fill="#fff"/><circle cx="13" cy="13" r="4.300" fill="#3f7cc4"/></svg></button>
    <button class="app flat w46" aria-label="Netdisk"><svg viewBox="0 0 26 26"><rect x="1" y="1" width="24" height="24" rx="2" fill="#429fe6"/><g fill="none" stroke="#fff" stroke-width="3"><circle cx="13" cy="9" r="4"/><circle cx="8" cy="15" r="4"/><circle cx="18" cy="15" r="4"/></g></svg></button>
    <button class="app" aria-label="Firefox"><svg viewBox="0 0 26 26"><circle cx="13" cy="13" r="11" fill="#314b9c"/><path d="M3 3q3 4 8 3-3 4 1 6t8-2q1-5-4-9 8 3 8 12a11 11 0 0 1-22 1q0-7 1-11z" fill="#f0642c"/><path d="M19 3q6 5 4 13l-4-5z" fill="#fbbd2c"/></svg></button>
    <button class="app flat w46" aria-label="Opera"><svg viewBox="0 0 26 26"><ellipse cx="13" cy="13" rx="8" ry="10" fill="none" stroke="#d8232e" stroke-width="5"/></svg></button>
    <button class="app" aria-label="WPS"><svg viewBox="0 0 26 26"><rect x="1" y="1" width="24" height="24" rx="3" fill="#fa7a35"/><path d="M6 9h13v6H9v7" fill="none" stroke="#fff" stroke-width="2"/></svg></button>
    <button class="app" aria-label="Sublime"><svg viewBox="0 0 26 26"><rect x="1" y="1" width="24" height="24" rx="2" fill="#4b4b4b"/><path d="M17 5.500h-4q-3 0-3 2.500t3 3h1q3 0 3 3t-3 2.500h-4" fill="none" stroke="#f2922c" stroke-width="2.500"/></svg></button>
    <button class="app ps"><span>Ps</span></button>
    <button class="app w37" aria-label="Messenger"><svg viewBox="0 0 26 26"><circle cx="18" cy="6" r="5" fill="#63b8ec"/><path d="M12 22q0-10 6-10t7 10z" fill="#4ba3e2"/><ellipse cx="10" cy="10" rx="9" ry="7" fill="#fbbf3a"/><path d="M6 15l-1 6 6-5z" fill="#fbbf3a"/></svg></button>
    <button class="app w37 gap" aria-label="Explorer"><svg viewBox="0 0 26 26"><path d="M21 17a9 9 0 1 1 1-5H9" fill="none" stroke="#2480c8" stroke-width="4.500"/><path d="M3 22Q0 18 9 9T25 3" fill="none" stroke="#f6c140" stroke-width="2"/></svg></button>
    <button class="app dw"><span>Dw</span></button>
    <button class="app" aria-label="Inletex"><svg viewBox="0 0 26 26"><rect x="1" y="1" width="24" height="24" rx="2" fill="#25836e"/><path d="M4 20V6h4v14zM10 20V4h12v16h-4V8h-4v12z" fill="none" stroke="#dff3ec" stroke-width="1.500"/></svg></button>
    <button class="app viv"><span>vivian</span></button>
    <span class="fill"></span>
    <div class="tray">
      <svg viewBox="0 0 12 12"><path d="M1 3h10v6H1zM2 5h8M2 7h8" stroke="#555" fill="#ccc"/></svg>
      <svg viewBox="0 0 12 12"><circle cx="6" cy="6" r="5.500" fill="#1b36b8" stroke="#ccd"/><path d="M4.300 4.500q0-2 1.800-2t1.600 1.800Q7.500 5.500 6 6.500V7.500M6 8.500v1.200" stroke="#fff" fill="none" stroke-width="1.200"/></svg>
      <svg viewBox="0 0 12 12"><path d="M3 0h6v3H3zM1.500 2h5v3h-5z" fill="#aaa" stroke="#fff"/><path d="M2 9h5L4.500 11z" fill="#fff"/></svg>
      <svg viewBox="0 0 12 12"><path d="M2 8h8L6 4z" fill="#eee"/></svg>
      <svg class="m5" viewBox="0 0 12 12"><circle cx="6" cy="6" r="6" fill="#eee"/><path d="M1 5h10M2 8h8M4 3v7M8 3v7" stroke="#444"/></svg>
      <svg class="m5" viewBox="0 0 12 12"><path d="M0 2h12v9H0z" fill="#164"/><path d="M2 2l3 8 2-8 4 9" stroke="#3f3" stroke-width="2" fill="none"/><path d="M3 6h6" stroke="#c3c" stroke-width="2"/></svg>
      <svg class="m5" viewBox="0 0 12 12"><circle cx="6" cy="6" r="6" fill="#f4d42c"/><circle cx="6" cy="6" r="4" fill="#54ad35"/><path d="M6 3v6M3 6h6" stroke="#fff" stroke-width="2"/></svg>
      <svg class="m5" viewBox="0 0 12 12"><circle cx="8" cy="3" r="3" fill="#b5def5"/><path d="M4 12q0-6 4-6t4 6z" fill="#6cb5e6"/><ellipse cx="4" cy="6" rx="4" ry="3" fill="#fbbf3a"/></svg>
      <svg class="m5" viewBox="0 0 12 12"><path d="M0 4h2l3-3v10L2 8H0z" fill="#eee"/><path d="M7 4q1 2 0 4M9 2q2 4 0 8" stroke="#eee" fill="none"/></svg>
      <svg class="m5" viewBox="0 0 12 12"><path d="M1 9v2M3.500 8v3M6 6v5M8.500 4v7M11 1v10" stroke="#ddd" stroke-width="1.400"/></svg>
      <svg class="m5" viewBox="0 0 12 12"><path d="M2 2h8v5q-4 4-8 0zM4 0v3M8 0v3M6 8v4" stroke="#fff" stroke-width="1.300" fill="#777"/></svg>
      <svg class="m5" viewBox="0 0 12 12"><path d="M1 1v11M1 1h7v6H1" stroke="#eee" fill="#ddd"/><circle cx="8.500" cy="8.500" r="3.500" fill="#d3342b"/><path d="M7 7l3 3M10 7l-3 3" stroke="#fff"/></svg>
      <time>14:52<br>2017/11/20</time><i class="desk"></i>
    </div>
  </div>
</section>
</div>
</body>
</html>
```

FILE: styles.css
```css
* { box-sizing: border-box; }
html, body { height: 100%; margin: 0; }
body {
  display: flex; flex-direction: column; overflow: hidden;
  background: #c4c4c4; color: #444;
  font: 9px/12px "Open Sans", "Noto Sans CJK SC", sans-serif;
}
h1, h2, h3, p, ol { margin: 0; padding: 0; font-weight: 400; }
i, em { font-style: normal; }
button {
  display: flex; align-items: center; justify-content: center; flex: none;
  margin: 0; padding: 0; border: 0; background: none; color: inherit; font: inherit;
}
svg { display: block; flex: none; }
.sprite { position: absolute; width: 0; height: 0; }
.s6 { width: 6px; height: 6px; }
.s8 { width: 8px; height: 8px; }
.s10 { width: 10px; height: 10px; }
.s12 { width: 12px; height: 12px; }
.s16 { width: 16px; height: 16px; }
.i18 { width: 20px; height: 18px; }
.grow { flex: 1; }
.sep { flex: none; width: 1px; height: 14px; margin: 0 2px; background: #ccc; }
.sep.s { height: 9px; background: #999; }
.ar { flex: none; display: inline-flex; justify-content: center; width: 7px; vertical-align: middle; }
.ar::after { content: ""; border: 2px solid transparent; border-top: 3px solid #666; border-bottom: 0; }
.ar.w::after { border-top-color: #fff; }

/* meeting window */
.titlebar {
  display: flex; align-items: center; flex: none; height: 22px; gap: 5px;
  border-bottom: 1px solid #27303c; overflow: hidden;
  background:
    radial-gradient(ellipse 48px 16px at 938px 18px, #1c2c38 30%, transparent),
    radial-gradient(ellipse 50px 26px at 880px 8px, #3d4e5c 20%, transparent),
    radial-gradient(ellipse 90px 30px at 800px 8px, #7fb2ec 20%, transparent),
    radial-gradient(ellipse 130px 24px at 620px 14px, #86bdf3, transparent),
    radial-gradient(ellipse 60px 14px at 285px 10px, #a7d8f6, transparent),
    radial-gradient(ellipse 110px 40px at 1190px 6px, #86b7ea 40%, transparent),
    linear-gradient(90deg, #d6f3fa, #c3f8fb 30%, #a6ecf8 70%, #b3fbfb);
}
.titlebar h1 { flex: 1; color: #111; font: 12px/20px "Noto Sans", sans-serif; }
.winbtns { display: flex; align-self: flex-start; height: 18px; border: 1px solid #6f8aa8; border-top: 0; border-right: 0; border-radius: 0 0 0 4px; background: #c9dcf0; }
.winbtns button { width: 27px; border-right: 1px solid #7f9ab8; }
.winbtns .last { width: 32px; padding-left: 12px; border: 0; }
.winbtns svg { width: 14px; height: 12px; }
.meeting { display: flex; flex: none; height: 36px; padding: 1px 0 1px 7px; gap: 1px; background: #b5b5b5; }
.meeting button { width: 34px; height: 34px; }
.meeting svg { width: 34px; height: 34px; }
.meeting .off { background: #c3bfb8; }
.meeting .help { width: 27px; margin-left: auto; border-left: 1px solid #999; overflow: hidden; }
.meeting .help svg { width: 28px; height: 28px; margin: 0 0 0 2px; }
.sessions { flex: none; height: 21px; padding-left: 5px; background: #6a6a6a; border-bottom: 1px solid #f2f2f2; }
.session { display: flex; align-items: center; justify-content: space-between; width: 113px; height: 21px; padding: 2px 6px 0 1px; background: #c4c4c4; border: 1px solid #e4e4e4; border-bottom: 0; color: #111; font-size: 11px; }
.session button { align-self: flex-start; }
.remote { display: flex; flex: 1; min-height: 0; padding: 0 44px 0 61px; }
.wps { display: flex; flex-direction: column; flex: 1; min-width: 0; }

/* menu */
.menu { display: flex; flex: none; height: 20px; background: #e6e6e6; padding-top: 1px; }
.menu > button { min-width: 45px; padding: 3px 7px 0; }
.menu > .brand { width: 80px; margin: -1px 4px 0 0; padding: 0 2px 0 3px; gap: 3px; background: #cb7c3e; color: #fff; font-size: 10px; }
.brand b { flex: 1; text-align: left; }
.menu > .ctx { min-width: 55px; border-top: 1px solid #f9a179; background: #dcdcdc; }
.menu > .ctx.on { background: #fff; color: #c8431c; font-weight: 700; }
.menu > .login { width: 58px; margin-top: -1px; padding: 0; background: #cb7c3e; color: #fff; }
.sys { display: flex; align-items: center; width: 150px; padding: 0 8px 0 4px; justify-content: space-between; }
.sys .q { font-size: 11px; }
.sys .wide { width: 16px; }

/* ribbon */
.ribbon { display: flex; flex: none; height: 49px; background: #fff; }
.grp { display: flex; flex: none; padding: 3px 4px 0; border-right: 1px solid #d4d4d4; height: 46px; margin-top: 2px; }
.tb { width: 49px; }
.tall { flex-direction: column; justify-content: flex-start; flex: 1; gap: 3px; white-space: nowrap; }
.tall span { display: flex; align-items: center; }
.ga { font: 700 9px "Open Sans", sans-serif; fill: #5d8fd0; }
.font, .para { flex-direction: column; padding: 0 2px; }
.font { width: 139px; border: 0; }
.para { width: 153px; border-left: 1px solid #d4d4d4; }
.row { display: flex; align-items: center; height: 20px; }
.c13 { width: 13px; }
.c15 { width: 15px; }
.c17 { width: 17px; }
.font .c15 { font-size: 11px; }
.font .row .big { width: 15px; margin-left: 1px; font-size: 12px; }
sup, sub { font-size: 6px; line-height: 0; }
.big sup { align-self: flex-start; margin-top: 4px; font-size: 9px; }
em { font-style: italic; }
.sel { background: #fbd0b4; }
.para .sel { height: 14px; }
.foot { display: flex; justify-content: flex-end; height: 6px; padding-right: 4px; }
.redline { min-width: 10px; line-height: 10px; border-bottom: 2px solid #f00; }
select { appearance: none; height: 17px; border: 1px solid #d0d0d0; border-radius: 0; padding: 0 4px 0 2px; color: #333; font: inherit;
  background: linear-gradient(#666, #666) right 5px center / 3px 2px no-repeat #fff; }
.face { width: 71px; margin-right: -1px; }
.size { width: 29px; }
.art { padding: 0 0 0 2px; width: 355px; }
.art > * { flex: none; }
.gallery { display: flex; width: 237px; height: 38px; margin-top: 0; border: 1px solid #ccc; }
.gallery button { flex: 1; font: 700 27px/34px "Open Sans", sans-serif; text-shadow: 0 1px 2px #0004; }
.gallery .more { flex: none; width: 9px; background: #d4d4d4; }
.a1 { color: #000; }
.a2 { color: #0fd07c; }
.a3 { color: #8d9ec4; -webkit-text-stroke: 2px #333; }
.a4 { color: #fff; -webkit-text-stroke: 1px #4d80c2; }
.a5 { color: #fca90a; }
.gallery .a6 { color: transparent; background: linear-gradient(#444 20%, #bbb 80%) text; text-shadow: none; }
.stack { display: flex; flex-direction: column; gap: 7px; width: 60px; padding: 2px 0 0 4px; }
.stack button { justify-content: flex-start; gap: 4px; height: 14px; white-space: nowrap; }
.stack .ar { margin-left: -3px; }
.fa { width: 10px; font-size: 10px; text-align: center; }
.hollow { color: #fff; -webkit-text-stroke: 1px #777; border-bottom: 2px solid #000; line-height: 10px; }
.fx { width: 50px; padding-top: 3px; }
.fxa { color: #fff; -webkit-text-stroke: 1px #7d95cf; font: 700 19px/18px "Open Sans", sans-serif; }
.fx .foot { margin-top: 1px; padding-right: 5px; }
.fx .tall { width: 100%; padding-left: 4px; }
.conv { border: 0; width: 66px; }

/* documents */
.docs { display: flex; flex: none; height: 19px; align-items: stretch; background: #fff; }
.quick { display: flex; align-items: center; width: 135px; padding-left: 1px; }
.quick button { width: 16px; }
.wlogo { width: 20px; background: #f3f3f3; }
.doc { display: flex; align-items: center; width: 144px; padding: 0 4px 0 2px; gap: 3px; background: #f3f3f3; color: #333; }
.doc span { flex: 1; white-space: nowrap; }
.doc.cur { background: #e3e3e3; border-bottom: 2px solid #f9a179; }
.newdoc { width: 19px; }
.find { display: flex; align-items: center; gap: 7px; padding-right: 6px; }
.find .sep { margin: 0 -3px 0 0; }
.find a { margin-left: -4px; color: #333; text-decoration: none; }

/* outline */
.main { display: flex; flex: 1; min-height: 0; }
.outline { display: flex; flex-direction: column; flex: none; width: 208px; background: #c6c6c6; border-right: 1px solid #b2b2b2; }
.otabs { display: flex; align-items: center; flex: none; height: 24px; margin: 0 4px; padding: 3px 0 0 2px; border-bottom: 2px solid #adadad; }
.otabs .sep { margin: 0 5px; }
.otabs .on { align-self: stretch; margin-bottom: -2px; padding: 0 2px; border-bottom: 2px solid #e07a3c; color: #d8631c; font-weight: 700; }
.olist { display: flex; flex: 1; min-height: 0; padding: 4px 5px 0 0; overflow: hidden; }
.olist ol { display: flex; flex-direction: column; flex: 1; gap: 12px; padding-top: 6px; list-style: none; }
.olist li { display: flex; flex: none; }
.no { display: flex; flex-direction: column; align-items: center; gap: 6px; width: 22px; padding: 2px 0 0 8px; font-size: 9px; font-weight: 700; }
.no svg { margin-left: -3px; }
.cur .no { color: #d8631c; }
.thumb { position: relative; display: flex; flex-direction: column; width: 160px; height: 90px; padding-bottom: 2px; background: #2b2b2b; color: #8fd14f; overflow: hidden; font-size: 4px; font-weight: 600; line-height: 5px; outline: 1px solid #35503f; outline-offset: -1px; }
.thumb h3 { flex: none; padding-top: 5px; color: #f02020; font-size: 6px; font-weight: 700; line-height: 8px; text-align: center; }
.thumb h3.or { color: #f04a1c; }
.tl { display: flex; flex-direction: column; flex: 1; justify-content: space-between; min-height: 0; padding: 3px 4px 0 10px; white-space: nowrap; }
.tl p { line-height: 4px; white-space: pre; }
.tl .r { color: #ff1818; }
.tl .w { color: #fff; }
.tl .in { padding-left: 12px; }
.tl .n1 { padding-left: 7px; }
.t5 { font-size: 3px; }
.t5 .r { font-size: 4px; }
.thumb .t6h { padding-top: 8px; }
.t6 { padding-bottom: 5px; font-size: 3px; }
.t7 { font-size: 3px; }
.cur .thumb { outline: 2px solid #d07a35; outline-offset: -2px; }
.thumb .bx { margin: 4px 13px 0; padding: 0; border: 1px solid #444; }
.t8 { padding: 1px 4px 0 15px; }
.t8 .sub { margin-left: -1px; color: #30e080; font-weight: 700; }
.thumb .t9h { padding-top: 10px; }
.tl.t9 { justify-content: flex-start; gap: 3px; padding: 8px 14px 0; }
.t9 .wrap { white-space: normal; font-size: 4px; line-height: 4px; }
.tlogo { position: absolute; right: 4px; bottom: 3px; display: flex; align-items: center; gap: 1px; color: #fff; font-size: 4px; font-weight: 700; }
.tlogo svg { width: 6px; height: 6px; }
.vbar { display: flex; flex-direction: column; align-items: center; flex: none; width: 14px; padding: 3px 0; background: #ababab; }
.knob { width: 10px; background: repeating-linear-gradient(#777 0 1px, transparent 1px 3px) center / 6px 7px no-repeat #d2d2d2; }
.tallknob { height: 91px; margin-top: 89px; }
.vbar .end { margin-top: auto; }
.oadd { display: flex; justify-content: center; align-items: center; flex: none; height: 22px; margin: 0 5px 0 4px; border-top: 1px solid #b2b2b2; }
.oadd button { width: 43px; height: 16px; border: 1px solid #d8853f; }

/* editor */
.work { display: flex; flex-direction: column; flex: 1; min-width: 0; background: #c6c6c6; }
.stage { display: flex; flex: 1; min-height: 0; }
.canvas { display: flex; justify-content: center; flex: 1; min-width: 0; padding: 12px 30px 0; overflow: hidden; }
.slide { position: relative; flex: none; width: 839px; height: 472px; background: #2b2b2b; border: 1px solid #14532f; box-shadow: 0 0 5px 2px #aaa; color: #92d840; }
.stitle { position: absolute; left: 68px; top: 23px; width: 702px; height: 41px; border: 1px solid #3c3c3c; color: #f00; text-align: center; white-space: pre; font: 700 28px/38px "Liberation Sans", "Noto Sans CJK SC", sans-serif; }
.stitle span { font-weight: 300; }
.ssub { position: absolute; left: 75px; top: 66px; color: #55f59a; font: 700 21px/28px "Noto Sans CJK SC", sans-serif; }
.sbox { position: absolute; left: 75px; top: 89px; width: 548px; height: 402px; padding: 11px 6px 0; border: 1px solid #a88078; font: 300 19px/26px "Liberation Sans", "Noto Sans CJK SC", sans-serif; }
.lines { display: flex; flex-direction: column; justify-content: space-between; height: 337px; }
.sbox > p { margin-top: -1px; }
.sbox p { height: 26px; white-space: pre; }
.h { position: absolute; width: 6px; height: 6px; background: #ffa77c; }
.tl0 { left: -4px; top: -4px; }
.tc { left: 270px; top: -4px; }
.tr { right: -4px; top: -4px; }
.ml { left: -4px; top: 197px; }
.mr { right: -4px; top: 197px; }
.rot { position: absolute; left: 267px; top: -17px; width: 12px; height: 16px; }
.caret { position: absolute; left: 245px; top: 125px; width: 8px; height: 16px; }
.floatbar { position: absolute; left: 631px; top: 93px; display: flex; flex-direction: column; align-items: center; gap: 7px; }
.floatbar button { width: 21px; height: 21px; background: #fff; border: 1px solid #888; }
.floatbar svg { width: 15px; height: 15px; }
.floatbar .minus { height: 10px; background: none; border: 0; }
.floatbar .minus svg { width: 10px; height: 10px; }
.logo { position: absolute; right: 23px; bottom: 21px; display: flex; align-items: center; gap: 2px; color: #fff; }
.logo > svg { width: 30px; height: 30px; }
.logo div { display: flex; flex-direction: column; }
.logo strong { font: 900 18px/19px "Noto Sans CJK SC", sans-serif; }
.logo small { font: 700 6px/8px "Open Sans", sans-serif; white-space: nowrap; }
.vbar.wide { width: 13px; padding-top: 7px; }
.midknob { height: 21px; margin-top: 143px; }
.ends { display: flex; flex-direction: column; gap: 5px; margin-top: auto; padding-bottom: 15px; }
.flip { transform: scaleY(-1); }
.notes { flex: none; height: 22px; padding: 4px 7px; border-top: 1px solid #b2b2b2; color: #333; }

.side { display: flex; flex-direction: column; flex: none; width: 30px; padding-top: 11px; background: #ebebeb; color: #333; }
.grip { flex: none; align-self: center; width: 11px; height: 3px; margin: 0 4px 7px 0; border: 1px solid #d6d6d6; border-width: 1px 0; }
.side button { flex-direction: column; height: 36px; gap: 1px; padding-top: 4px; }
.edge { flex: none; width: 5px; background: #dcdcdc; }
.edge button { width: 5px; height: 73px; margin-top: 238px; background: #fa7d3c; }
.edge svg { width: 5px; height: 8px; }

.status { display: flex; align-items: center; flex: none; height: 16px; background: #dedede; }
.st1 { width: 254px; padding-left: 101px; }
.st2 { padding: 0 6px 0 16px; }
.status button { align-self: stretch; width: 27px; }
.status .sel { background: #f3d3bd; }
.status .play { width: 25px; margin-left: 6px; background: #cb7c3e; }
.pct { width: 42px; text-align: center; margin-left: 3px; font-size: 10px; margin-right: -3px; }
.status .fit { margin: 0 3px 0 6px; }
input[type=range] { appearance: none; width: 98px; height: 12px; margin: 0 5px; background: linear-gradient(90deg, #fa7d3c 44%, #888 44%) center / 100% 2px no-repeat; }
input[type=range]::-webkit-slider-thumb { appearance: none; width: 10px; height: 10px; border: 1px solid #888; border-radius: 50%; background: #fff; }

/* remote taskbar */
.taskbar { display: flex; flex: none; height: 20px; overflow: hidden; border-top: 1px solid #222; background: #929292; }
.taskbar > button { align-items: flex-start; height: 30px; }
.orb { width: 86px; padding: 1px 46px 0 0; }
.orb svg { width: 28px; height: 28px; }
.app { width: 45px; padding-top: 2px; border: 1px solid #777; border-top: 0; background: linear-gradient(150deg, #e4e4ea 35%, #c3c8e4 36%, #bdbdbd 50%); }
.app.flat { border-color: #98d2bc; background: #98d2bc; }
.app svg { width: 26px; height: 26px; }
.w37 { width: 38px; margin-right: 5px; box-shadow: 3px 0 #aaa; }
.w46 { width: 46px; }
.app span { width: 20px; height: 22px; text-align: center; white-space: nowrap; font: 700 11px/18px "Open Sans", sans-serif; }
.ps span, .dw span { margin-top: 1px; }
.ps span { background: #1c1d5c; color: #a5c8fa; }
.dw span { background: #1d2a1a; border: 1px solid #b5e61d; color: #c3f32c; line-height: 16px; }
.viv span { display: flex; justify-content: center; width: 24px; height: 24px; border-radius: 50%; background: #fff; color: #333; font-size: 7px; line-height: 22px; }
.fill { flex: 1; background: #98d2bc; }
.tray { display: flex; align-items: flex-start; flex: none; gap: 4px; width: 266px; padding-left: 1px; justify-content: flex-end; color: #fff; }
.tray svg { width: 12px; height: 12px; margin-top: 8px; }
.tray .m5 { margin-left: 1px; }
.tray time { width: 52px; margin-top: 2px; text-align: center; line-height: 12px; }
.desk { width: 10px; height: 30px; border: 1px solid #444; background: linear-gradient(135deg, #555 40%, #8aa79d 41%); }
```
